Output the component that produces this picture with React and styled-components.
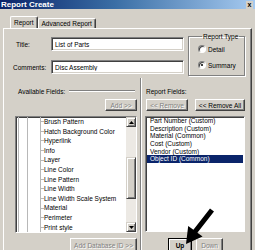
import React from "react";
import styled, { createGlobalStyle } from "styled-components";

const GlobalStyle = createGlobalStyle`
  html, body {
    margin: 0;
    padding: 0;
    background: #d4d0c8;
  }
  * {
    box-sizing: border-box;
  }
`;

const Window = styled.div`
  position: relative;
  width: 255px;
  height: 250px;
  overflow: hidden;
  background: #d4d0c8;
  font-family: "Liberation Sans", Arial, sans-serif;
  font-size: 6.5px;
  color: #000;
  display: flex;
  flex-direction: column;
`;

const TitleBar = styled.div`
  height: 9px;
  flex: none;
  display: flex;
  align-items: center;
  justify-content: space-between;
  padding: 0 2px 0 1px;
  background: linear-gradient(to right, #0a246a 0%, #3a6ea5 45%, #a6caf0 100%);
`;

const TitleText = styled.span`
  color: #fff;
  font-weight: bold;
  font-size: 8px;
  line-height: 9px;
`;

const CloseBox = styled.span`
  width: 7px;
  height: 8px;
  background: #d4d0c8;
  font-size: 7px;
  font-weight: bold;
  line-height: 7px;
  text-align: center;
  color: #000;
`;

const TabStrip = styled.div`
  height: 19px;
  flex: none;
  display: flex;
  align-items: flex-end;
  padding-left: 10px;
`;

const Tab = styled.div`
  height: ${(p) => (p.$active ? "12px" : "10px")};
  padding: 0 3px;
  display: flex;
  align-items: center;
  border-top: 1px solid #fff;
  border-left: 1px solid #fff;
  border-right: 1px solid #404040;
  box-shadow: inset -1px 0 #808080;
  border-radius: 2px 2px 0 0;
  white-space: nowrap;
`;

const Panel = styled.div`
  flex: 1;
  margin: 0 3px;
  border-top: 1px solid #fff;
  border-left: 1px solid #fff;
  border-right: 1px solid #404040;
  box-shadow: inset -1px 0 #808080;
  display: flex;
  flex-direction: column;
`;

const TopSection = styled.div`
  display: flex;
  padding: 4px 0 0 9px;
`;

const FieldGrid = styled.div`
  margin-top: 4px;
  display: grid;
  grid-template-columns: 38px 133px;
  grid-auto-rows: 14px;
  row-gap: 9px;
  align-items: center;
  align-self: flex-start;
`;

const FieldLabel = styled.label`
  padding-left: ${(p) => p.$indent || 0}px;
`;

const TextBox = styled.input`
  width: 100%;
  height: 14px;
  margin: 0;
  padding: 0 3px;
  font-family: inherit;
  font-size: 6.5px;
  color: #000;
  background: #fff;
  border: 1px solid;
  border-color: #808080 #fff #fff #808080;
  box-shadow: inset 1px 1px #404040, inset -1px -1px #d4d0c8;
  outline: none;
`;

const GroupBox = styled.fieldset`
  margin: 0 0 0 4px;
  width: 57px;
  height: 43px;
  padding: 5px 0 0 9px;
  border: 1px solid #808080;
  box-shadow: 1px 1px 0 #fff, inset 1px 1px 0 #fff;
`;

const Legend = styled.legend`
  margin-left: 4px;
  padding: 0 1px;
  line-height: 7px;
`;

const RadioList = styled.div`
  display: flex;
  flex-direction: column;
  gap: 8px;
`;

const RadioRow = styled.div`
  height: 8px;
  display: flex;
  align-items: center;
  gap: 2px;
`;

const RadioCircle = styled.span`
  width: 8px;
  height: 8px;
  border-radius: 50%;
  background: #fff;
  border: 1px solid;
  border-color: #808080 #fff #fff #808080;
  box-shadow: inset 1px 1px #404040;
  display: flex;
  align-items: center;
  justify-content: center;
`;

const RadioDot = styled.span`
  width: 2px;
  height: 2px;
  border-radius: 50%;
  background: #000;
`;

const Columns = styled.div`
  flex: 1;
  display: flex;
  padding-top: 11px;
`;

const Column = styled.div`
  width: ${(p) => p.$width}px;
  margin-left: ${(p) => p.$offset}px;
  display: flex;
  flex-direction: column;
`;

const Separator = styled.div`
  width: 2px;
  margin: -9px 0 0 3px;
  border-left: 1px solid #808080;
  border-right: 1px solid #fff;
`;

const HeaderRow = styled.div`
  height: 8px;
  display: flex;
  align-items: center;
  padding-left: ${(p) => p.$indent || 0}px;
`;

const EtchedLine = styled.div`
  flex: 1;
  margin: 0 2px 0 4px;
  border-top: 1px solid #808080;
  border-bottom: 1px solid #fff;
`;

const ButtonRow = styled.div`
  display: flex;
  justify-content: ${(p) => p.$justify || "flex-start"};
  gap: ${(p) => p.$gap || 0}px;
  margin-top: ${(p) => p.$top}px;
  padding-left: ${(p) => p.$indent || 0}px;
`;

const Button = styled.button`
  width: ${(p) => p.$width}px;
  height: ${(p) => p.$height || 12}px;
  margin: 0;
  padding: 0;
  flex: none;
  font-family: inherit;
  font-size: 6.5px;
  font-weight: ${(p) => (p.$default ? "bold" : "normal")};
  white-space: nowrap;
  background: #d4d0c8;
  color: ${(p) => (p.$disabled ? "#808080" : "#000")};
  text-shadow: ${(p) => (p.$disabled ? "1px 1px 0 #fff" : "none")};
  border: 1px solid;
  border-color: ${(p) =>
    p.$default ? "#000" : "#fff #404040 #404040 #fff"};
  box-shadow: ${(p) =>
    p.$default
      ? "inset 1px 1px #fff, inset -1px -1px #808080"
      : "inset -1px -1px #808080"};
`;

const ListBox = styled.div`
  height: ${(p) => p.$height}px;
  margin-top: 5px;
  background: #fff;
  border: 1px solid;
  border-color: #808080 #fff #fff #808080;
  box-shadow: inset 1px 0 #404040, inset 0 1px #404040;
  display: flex;
  overflow: hidden;
`;

const TreeArea = styled.div`
  flex: 1;
  padding-left: 1px;
  overflow: hidden;
`;

const line = "linear-gradient(#b8b8b8, #b8b8b8)";

const TreeItem = styled.div`
  height: 9.6px;
  line-height: 9.6px;
  padding-left: 27px;
  white-space: nowrap;
  background: ${line} 1px 0 / 1px 100% no-repeat,
    ${line} 10px 0 / 1px 100% no-repeat,
    ${line} 23px 0 / 1px 100% no-repeat,
    ${line} 23px 50% / 4px 1px no-repeat;
`;

const ScrollBar = styled.div`
  width: 10px;
  flex: none;
  display: flex;
  flex-direction: column;
  background: #ece9e4;
`;

const ScrollButton = styled.div`
  width: 10px;
  height: 10px;
  flex: none;
  background: #d4d0c8;
  border: 1px solid;
  border-color: #d4d0c8 #404040 #404040 #d4d0c8;
  box-shadow: inset 1px 1px #fff, inset -1px -1px #808080;
  display: flex;
  align-items: center;
  justify-content: center;
`;

const ScrollTrack = styled.div`
  flex: 1;
  padding-top: 30px;
`;

const ScrollThumb = styled.div`
  height: 42px;
  background: #d4d0c8;
  border: 1px solid;
  border-color: #d4d0c8 #404040 #404040 #d4d0c8;
  box-shadow: inset 1px 1px #fff, inset -1px -1px #808080;
`;

const FieldRow = styled.div`
  height: 7.7px;
  line-height: 7.7px;
  padding-left: 3px;
  margin-right: 1px;
  white-space: nowrap;
  background: ${(p) => (p.$selected ? "#0a246a" : "transparent")};
  color: ${(p) => (p.$selected ? "#fff" : "#000")};
`;

const FieldList = styled.div`
  flex: 1;
  padding-left: 1px;
  overflow: hidden;
`;

const Pointer = styled.svg`
  position: absolute;
  left: 0;
  top: 0;
  pointer-events: none;
`;

const Arrow = ({ dir }) => (
  <svg width="5" height="3" viewBox="0 0 5 3">
    <path d={dir === "up" ? "M2.5 0 L5 3 L0 3 Z" : "M0 0 L5 0 L2.5 3 Z"} fill="#000" />
  </svg>
);

const availableFields = [
  "Brush Pattern",
  "Hatch Background Color",
  "Hyperlink",
  "Info",
  "Layer",
  "Line Color",
  "Line Pattern",
  "Line Width",
  "Line Width Scale System",
  "Material",
  "Perimeter",
  "Print style",
];

const reportFields = [
  "Part Number (Custom)",
  "Description (Custom)",
  "Material (Common)",
  "Cost (Custom)",
  "Vendor (Custom)",
  "Object ID (Common)",
];

export default function App() {
  return (
    <>
      <GlobalStyle />
      <Window>
        <TitleBar>
          <TitleText>Report Create</TitleText>
          <CloseBox>x</CloseBox>
        </TitleBar>

        <TabStrip>
          <Tab $active>Report</Tab>
          <Tab>Advanced Report</Tab>
        </TabStrip>

        <Panel>
          <TopSection>
            <FieldGrid>
              <FieldLabel $indent={3}>Title:</FieldLabel>
              <TextBox readOnly defaultValue="List of Parts" />
              <FieldLabel>Comments:</FieldLabel>
              <TextBox readOnly defaultValue="Disc Assembly" />
            </FieldGrid>
            <GroupBox>
              <Legend>Report Type</Legend>
              <RadioList>
                <RadioRow>
                  <RadioCircle />
                  <span>Detail</span>
                </RadioRow>
                <RadioRow>
                  <RadioCircle>
                    <RadioDot />
                  </RadioCircle>
                  <span>Summary</span>
                </RadioRow>
              </RadioList>
            </GroupBox>
          </TopSection>

          <Columns>
            <Column $width={122} $offset={11}>
              <HeaderRow $indent={3}>
                <span>Available Fields:</span>
                <EtchedLine />
              </HeaderRow>
              <ButtonRow $top={4} $justify="flex-end">
                <Button $width={32} $disabled>
                  Add &gt;&gt;
                </Button>
              </ButtonRow>
              <ListBox $height={117}>
                <TreeArea>
                  {availableFields.map((f) => (
                    <TreeItem key={f}>{f}</TreeItem>
                  ))}
                </TreeArea>
                <ScrollBar>
                  <ScrollButton>
                    <Arrow dir="up" />
                  </ScrollButton>
                  <ScrollTrack>
                    <ScrollThumb />
                  </ScrollTrack>
                  <ScrollButton>
                    <Arrow dir="down" />
                  </ScrollButton>
                </ScrollBar>
              </ListBox>
              <ButtonRow $top={5} $justify="flex-end">
                <Button $width={67} $height={14} $disabled>
                  Add Database ID &gt;&gt;
                </Button>
              </ButtonRow>
            </Column>

            <Separator />

            <Column $width={100} $offset={3}>
              <HeaderRow $indent={1}>
                <span>Report Fields:</span>
              </HeaderRow>
              <ButtonRow $top={4} $gap={7} $indent={1}>
                <Button $width={42} $disabled>
                  &lt;&lt; Remove
                </Button>
                <Button $width={50}>&lt;&lt; Remove All</Button>
              </ButtonRow>
              <ListBox $height={116}>
                <FieldList>
                  {reportFields.map((f, i) => (
                    <FieldRow key={f} $selected={i === reportFields.length - 1}>
                      {f}
                    </FieldRow>
                  ))}
                </FieldList>
              </ListBox>
              <ButtonRow $top={6} $gap={4} $indent={23}>
                <Button $width={24} $height={14} $default>
                  Up
                </Button>
                <Button $width={27} $height={14} $disabled>
                  Down
                </Button>
              </ButtonRow>
            </Column>
          </Columns>
        </Panel>

        <Pointer width="255" height="250" viewBox="0 0 255 250">
          <polygon
            points="186,244 202.6,236.5 197.4,232.7 214,211.5 210,208.5 193.4,229.7 188.2,225.9"
            fill="#000"
          />
        </Pointer>
      </Window>
    </>
  );
}
